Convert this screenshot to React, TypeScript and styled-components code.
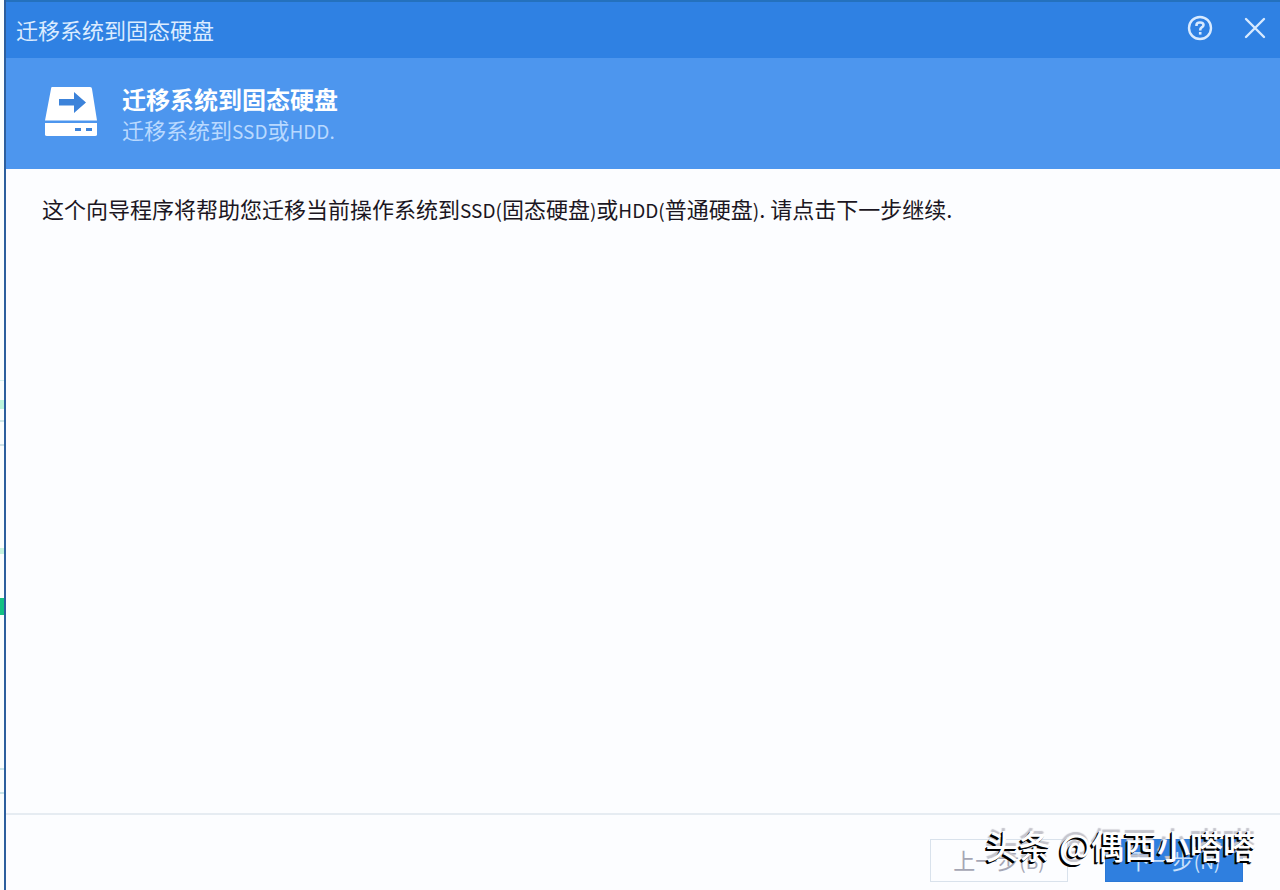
import React from 'react';
import styled, { createGlobalStyle } from 'styled-components';

const GlobalStyle = createGlobalStyle`
  * { box-sizing: border-box; }
  html, body { margin: 0; }
  body {
    background: #fcfdff;
    color: #1b1622;
    font-family: "Noto Sans CJK SC", sans-serif;
    font-size: 22px;
    line-height: 30px;
  }
`;

const Screen = styled.div`
  position: relative;
  display: flex;
  min-height: 100vh;
  overflow: hidden;
`;

const BackWindow = styled.div`
  position: relative;
  flex: none;
  width: 4px;
  background: #fafefe;
`;

const Mark = styled.span<{ $top: number; $height: number; $color: string }>`
  position: absolute;
  left: 0;
  width: 4px;
  top: ${p => p.$top}px;
  height: ${p => p.$height}px;
  background: ${p => p.$color};
`;

const Dialog = styled.main`
  flex: 1;
  min-width: 0;
  display: flex;
  flex-direction: column;
  border-left: 2px solid #2c5f9e;
  background: #fcfdff;
`;

const TitleBar = styled.header`
  display: flex;
  align-items: center;
  justify-content: space-between;
  height: 58px;
  padding: 0 11px 4px 10px;
  border-top: 2px solid #2471bd;
  background: #2f81e3;
  color: #dcecff;
`;

const WindowTitle = styled.span`
  padding-top: 2px;
`;

const WindowActions = styled.div`
  display: flex;
  gap: 27px;
`;

const IconButton = styled.button`
  display: flex;
  align-items: center;
  justify-content: center;
  width: 28px;
  height: 28px;
  padding: 0;
  border: 0;
  background: none;
  color: #d8eaff;
`;

const Banner = styled.section`
  display: flex;
  align-items: flex-start;
  gap: 24px;
  height: 111px;
  padding: 26px 39px;
  background: #4d96ee;
`;

const BannerIcon = styled.svg`
  flex: none;
  margin-top: 3px;
`;

const BannerTitle = styled.h1`
  margin: 0;
  color: #fff;
  font-size: 24px;
  line-height: 30px;
  font-weight: 700;
`;

const BannerText = styled.p`
  margin: 0;
  color: #b9d9ff;
`;

const Latin = styled.span`
  font-size: 19px;
`;

const Content = styled.section`
  flex: 1;
  padding: 24px 36px;
`;

const Message = styled.p`
  margin: 0;
`;

const Footer = styled.footer`
  display: flex;
  justify-content: flex-end;
  gap: 37px;
  height: 77px;
  padding: 24px 37px 8px;
  border-top: 2px solid #e6ecf2;
`;

const WizardButton = styled.button<{ $primary?: boolean }>`
  width: 138px;
  height: 43px;
  padding: 0 0 2px;
  border: 1px solid ${p => (p.$primary ? '#2a78d6' : '#d9e2ec')};
  background: ${p => (p.$primary ? '#2f7fdf' : '#fcfdff')};
  color: ${p => (p.$primary ? '#c9e0fb' : '#a5a6b4')};
  font: inherit;
`;

const Watermark = styled.div`
  position: absolute;
  right: 24px;
  bottom: 25px;
  color: #fff;
  font-size: 33px;
  font-weight: 500;
  line-height: 40px;
  white-space: nowrap;
  pointer-events: none;
  text-shadow: -1px 1px 0 #000, -2px 2px 0 #000, -1px -3px 1px #c4c4cc;
`;

const marks = [
  { top: 380, height: 1, color: '#d4f2f1' },
  { top: 400, height: 9, color: '#bcf4dc' },
  { top: 420, height: 2, color: '#cfe9ea' },
  { top: 444, height: 2, color: '#cfe3e8' },
  { top: 548, height: 6, color: '#c5f3df' },
  { top: 598, height: 17, color: '#12c184' },
  { top: 768, height: 2, color: '#c8e4e9' },
  { top: 792, height: 2, color: '#c8e4e9' },
];

const DriveIcon = () => (
  <BannerIcon width="53" height="50" viewBox="0 0 53 50" aria-hidden="true">
    <path fill="#fff" d="M7 0H45Q47 0 47 2L52 33.500H0L6 2Q6 0 7 0Z" />
    <path fill="#fff" d="M0 36H52V47.500Q52 49 50 49H2Q0 49 0 47.500Z" />
    <path fill="#3c83da" d="M14 12H29V5L41 15.500L29 26V18.500H14Z" />
    <path fill="#3c83da" d="M30 41H36V44H30ZM41 41H47V44H41Z" />
  </BannerIcon>
);

const HelpIcon = () => (
  <svg width="26" height="26" viewBox="0 0 26 26" fill="none" stroke="currentColor" aria-hidden="true">
    <circle cx="13" cy="13" r="11" strokeWidth="2.400" />
    <path strokeWidth="2.600" d="M9.500 11V10Q9.500 7.500 13 7.500T16.500 10Q16.500 11.500 14.500 12.500Q13.200 13.300 13.200 15.500" />
    <path strokeWidth="2.600" d="M13.200 17V19.600" />
  </svg>
);

const CloseIcon = () => (
  <svg width="22" height="22" viewBox="0 0 22 22" fill="none" stroke="currentColor" strokeWidth="2.400" strokeLinecap="round" aria-hidden="true">
    <path d="M2 2L20 20M20 2L2 20" />
  </svg>
);

export default function App() {
  return (
    <Screen>
      <GlobalStyle />
      <BackWindow>
        {marks.map(m => (
          <Mark key={m.top} $top={m.top} $height={m.height} $color={m.color} />
        ))}
      </BackWindow>
      <Dialog>
        <TitleBar>
          <WindowTitle>迁移系统到固态硬盘</WindowTitle>
          <WindowActions>
            <IconButton aria-label="帮助"><HelpIcon /></IconButton>
            <IconButton aria-label="关闭"><CloseIcon /></IconButton>
          </WindowActions>
        </TitleBar>
        <Banner>
          <DriveIcon />
          <div>
            <BannerTitle>迁移系统到固态硬盘</BannerTitle>
            <BannerText>迁移系统到<Latin>SSD</Latin>或<Latin>HDD.</Latin></BannerText>
          </div>
        </Banner>
        <Content>
          <Message>
            这个向导程序将帮助您迁移当前操作系统到<Latin>SSD(</Latin>固态硬盘<Latin>)</Latin>或<Latin>HDD(</Latin>普通硬盘<Latin>)</Latin>. 请点击下一步继续.
          </Message>
        </Content>
        <Footer>
          <WizardButton>上一步<Latin>(B)</Latin></WizardButton>
          <WizardButton $primary>下一步<Latin>(N)</Latin></WizardButton>
        </Footer>
      </Dialog>
      <Watermark>头条 @偶西小嗒嗒</Watermark>
    </Screen>
  );
}
